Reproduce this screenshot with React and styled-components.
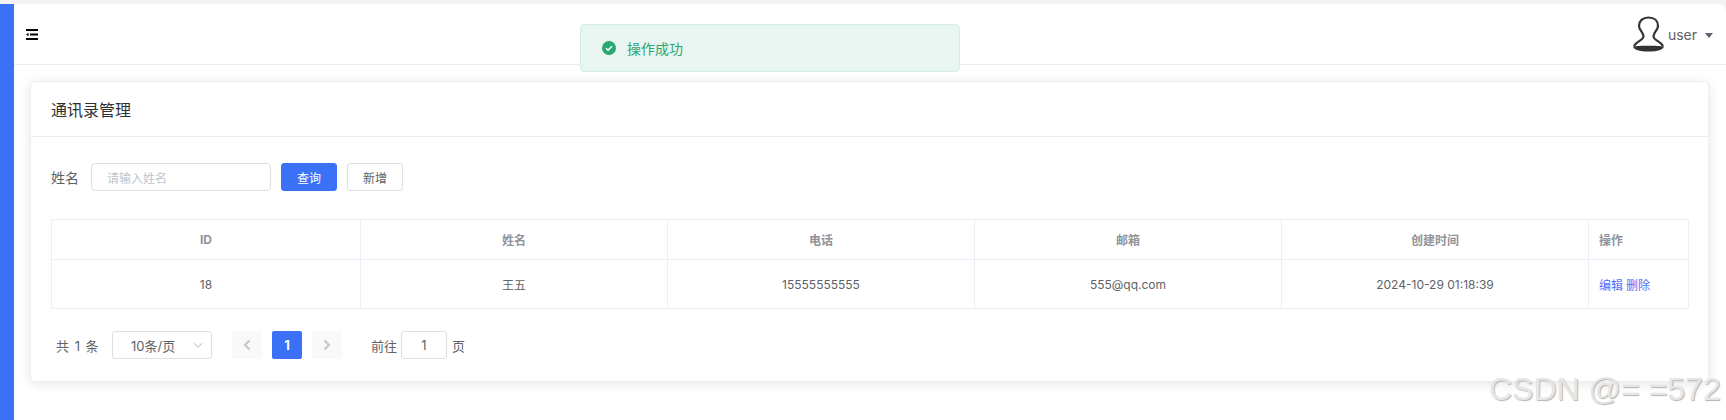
import React from 'react';
import styled, { createGlobalStyle } from 'styled-components';

const FONT = 'Inter, "Noto Sans CJK SC", sans-serif';

const GlobalStyle = createGlobalStyle`
  html, body { margin: 0; padding: 0; background: #fff; }
  body { font-family: ${FONT}; overflow: hidden; }
  * { box-sizing: border-box; }
`;

const Page = styled.div`
  position: relative;
  height: 420px;
  padding-top: 4px;
  background: #f3f3f5;
  display: flex;
  overflow: hidden;
`;

const Sidebar = styled.div`
  width: 14px;
  flex: none;
  background: #3a71f7;
`;

const Main = styled.div`
  flex: 1;
  background: #fff;
  border-top-right-radius: 8px;
  min-width: 0;
`;

const Header = styled.div`
  height: 61px;
  border-bottom: 1px solid #ebedf2;
  display: flex;
  align-items: center;
  justify-content: space-between;
  padding: 0 13px 0 12px;
`;

const MenuIcon = styled.svg`
  width: 12px;
  height: 11px;
  display: block;
`;

const UserBox = styled.div`
  display: flex;
  align-items: center;
  color: #606266;
  font-size: 14px;
`;

const UserIcon = styled.svg`
  width: 33px;
  height: 36px;
  margin-right: 3px;
  display: block;
`;

const Caret = styled.span`
  width: 0;
  height: 0;
  margin: 2px 0 0 8px;
  border-left: 4.5px solid transparent;
  border-right: 4.5px solid transparent;
  border-top: 5px solid #606266;
`;

const Content = styled.div`
  padding: 16px 17px 0 16px;
`;

const Card = styled.div`
  height: 301px;
  background: #fff;
  border: 1px solid #ebeef5;
  border-radius: 4px;
  box-shadow: 0 2px 12px 0 rgba(0, 0, 0, 0.1);
`;

const CardTitle = styled.div`
  height: 55px;
  padding-left: 20px;
  display: flex;
  align-items: center;
  font-size: 16px;
  color: #303133;
  border-bottom: 1px solid #ebeef5;
`;

const CardBody = styled.div`
  padding: 26px 19px 0 20px;
`;

const SearchRow = styled.div`
  display: flex;
  align-items: center;
  height: 28px;
`;

const Label = styled.span`
  font-size: 14px;
  color: #606266;
  width: 40px;
`;

const TextInput = styled.div`
  width: 180px;
  height: 28px;
  border: 1px solid #dcdfe6;
  border-radius: 4px;
  padding-left: 15px;
  display: flex;
  align-items: center;
  font-size: 12px;
  color: #c0c4cc;
`;

const Button = styled.button`
  width: 56px;
  height: 28px;
  margin-left: ${(p) => p.$gap}px;
  padding: 0;
  font-family: inherit;
  font-size: 12px;
  border-radius: 3px;
  border: 1px solid ${(p) => (p.$primary ? '#3a71f7' : '#dcdfe6')};
  background: ${(p) => (p.$primary ? '#3a71f7' : '#fff')};
  color: ${(p) => (p.$primary ? '#fff' : '#606266')};
`;

const Table = styled.div`
  margin-top: 28px;
  border: 1px solid #ebeef5;
  border-width: 1px 0 0 1px;
  display: grid;
  grid-template-columns: 309px 307px 307px 307px 307px 100px;
  grid-template-rows: 40px 49px;
  width: 1638px;
`;

const Cell = styled.div`
  border: 1px solid #ebeef5;
  border-width: 0 1px 1px 0;
  display: flex;
  align-items: center;
  justify-content: ${(p) => (p.$left ? 'flex-start' : 'center')};
  padding-left: ${(p) => (p.$left ? 10 : 0)}px;
  font-size: 12px;
  font-weight: ${(p) => (p.$head ? 700 : 400)};
  color: ${(p) => (p.$head ? '#909399' : '#606266')};
`;

const LinkText = styled.a`
  color: #4d6ffb;
  font-size: 12px;
  margin-right: 3px;
`;

const Pager = styled.div`
  margin-top: 22px;
  padding-left: 5px;
  display: flex;
  align-items: center;
  height: 28px;
  font-size: 13px;
  color: #606266;
`;

const Total = styled.span`
  width: 56px;
  word-spacing: 2px;
`;

const SizeSelect = styled.div`
  width: 100px;
  height: 28px;
  border: 1px solid #dcdfe6;
  border-radius: 3px;
  padding: 0 7px 0 18px;
  display: flex;
  align-items: center;
  justify-content: space-between;
`;

const PageBtn = styled.div`
  width: 30px;
  height: 28px;
  margin-left: ${(p) => p.$gap}px;
  border-radius: 2px;
  display: flex;
  align-items: center;
  justify-content: center;
  font-weight: 700;
  background: ${(p) => (p.$active ? '#3a71f7' : '#f9f9fa')};
  color: ${(p) => (p.$active ? '#fff' : '#c0c4cc')};
`;

const Jump = styled.span`
  margin-left: 29px;
`;

const JumpInput = styled.div`
  width: 46px;
  height: 28px;
  margin: 0 5px 0 4px;
  border: 1px solid #dcdfe6;
  border-radius: 3px;
  display: flex;
  align-items: center;
  justify-content: center;
`;

const Message = styled.div`
  position: absolute;
  left: 580px;
  top: 24px;
  width: 380px;
  height: 48px;
  padding-left: 21px;
  display: flex;
  align-items: center;
  gap: 11px;
  background: #e8f5f0;
  border: 1px solid #d3ede4;
  border-radius: 4px;
  font-size: 14px;
  color: #2ca673;
`;

const Watermark = styled.div`
  position: absolute;
  left: 1489px;
  top: 368px;
  font-family: "Liberation Sans", sans-serif;
  font-size: 32px;
  line-height: 42px;
  white-space: nowrap;
  color: #e6e6e6;
  text-shadow: 1px 1px 1px #b4b4b4;
`;

const Chevron = ({ d, size = 14, width = 2 }) => (
  <svg width={size} height={size} viewBox="0 0 14 14" fill="none" stroke="#c0c4cc" strokeWidth={width}>
    <path d={d} />
  </svg>
);

const columns = ['ID', '姓名', '电话', '邮箱', '创建时间'];
const row = ['18', '王五', '15555555555', '555@qq.com', '2024-10-29 01:18:39'];

export default function App() {
  return (
    <Page>
      <GlobalStyle />
      <Sidebar />
      <Main>
        <Header>
          <MenuIcon viewBox="0 0 12 11">
            <path d="M0 0h12v2H0zM4 4.5h8v2H4zM0 9h12v2H0zM2.5 3.8v3.4L0 5.500z" fill="#000" />
          </MenuIcon>
          <UserBox>
            <UserIcon viewBox="0 0 33 36" fill="none" stroke="#333" strokeWidth="2.2">
              <path d="M2 30c2.500-5 10-6 9.500-10-.5-4-4.500-6-4.500-10C7 5 10.500 1.500 16.500 1.500S26 5 26 10c0 4-4 6-4.500 10-.5 4 7 5 9.500 10" />
              <path d="M1 30.500c6-1 25-1 31 0-1 3.500-6 5-15.500 5S2 34 1 30.500z" fill="#333" stroke="none" />
            </UserIcon>
            <span>user</span>
            <Caret />
          </UserBox>
        </Header>
        <Content>
          <Card>
            <CardTitle>通讯录管理</CardTitle>
            <CardBody>
              <SearchRow>
                <Label>姓名</Label>
                <TextInput>请输入姓名</TextInput>
                <Button $primary $gap={10}>查询</Button>
                <Button $gap={10}>新增</Button>
              </SearchRow>
              <Table>
                {columns.map((c) => <Cell $head key={c}>{c}</Cell>)}
                <Cell $head $left>操作</Cell>
                {row.map((c) => <Cell key={c}>{c}</Cell>)}
                <Cell $left>
                  <LinkText>编辑</LinkText>
                  <LinkText>删除</LinkText>
                </Cell>
              </Table>
              <Pager>
                <Total>共 1 条</Total>
                <SizeSelect>
                  <span>10条/页</span>
                  <Chevron d="M2.5 5l4.500 4.500L11.500 5" size={12} width={1.2} />
                </SizeSelect>
                <PageBtn $gap={20}><Chevron d="M9.500 2.500L5 7l4.500 4.500" /></PageBtn>
                <PageBtn $active $gap={10}>1</PageBtn>
                <PageBtn $gap={10}><Chevron d="M4.500 2.500L9 7l-4.500 4.500" /></PageBtn>
                <Jump>前往</Jump>
                <JumpInput>1</JumpInput>
                <span>页</span>
              </Pager>
            </CardBody>
          </Card>
        </Content>
      </Main>
      <Message>
        <svg width="14" height="14" viewBox="0 0 14 14">
          <circle cx="7" cy="7" r="7" fill="#2ca673" />
          <path d="M4 7.200l2.100 2L10 5.200" fill="none" stroke="#fff" strokeWidth="1.500" />
        </svg>
        操作成功
      </Message>
      <Watermark>CSDN @= =572</Watermark>
    </Page>
  );
}
